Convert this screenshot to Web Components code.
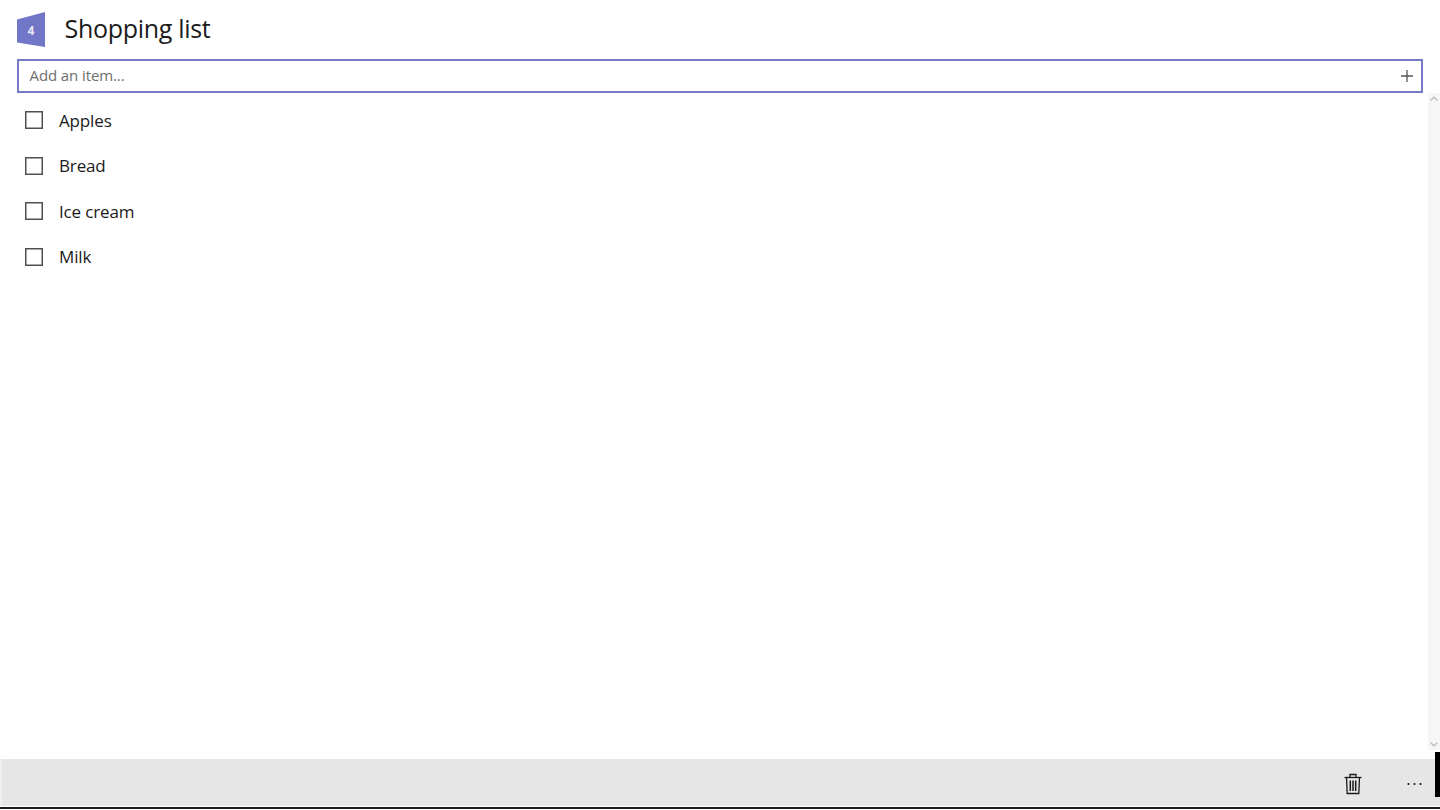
<!DOCTYPE html>
<html>
<head>
<meta charset="utf-8">
<title>Shopping list</title>
<style>
    html,body{
        margin:0;
        height:100%;
        background:white;
        overflow:hidden;
    }
    body{
        font-family:'Open Sans','Noto Sans',sans-serif;
        color:#1a1a1a;
    }
</style>
</head>
<body>
<list-app>
    <list-item>Apples</list-item>
    <list-item>Bread</list-item>
    <list-item>Ice cream</list-item>
    <list-item>Milk</list-item>
</list-app>

<script>
// LIST ROW
const itemTemplate = document.createElement('template');
itemTemplate.innerHTML = `
<style>
    :host{
        display:flex;
        align-items:center;
        height:45.5px;
        padding-left:25px;
        font-size:17px;
        letter-spacing:-0.15px;
    }
    .box{
        margin-right:16px;
        flex:none;
        display:block;
    }
</style>
<svg class="box" width="18" height="18" viewBox="0 0 18 18"><rect x="0.75" y="0.75" width="16.5" height="16.5" fill="none" stroke="#505050" stroke-width="1.5"/></svg>
<span><slot></slot></span>
`;

class ListItem extends HTMLElement{
    constructor(){
        super();
        this.attachShadow({mode:'open'});
        this.shadowRoot.appendChild(itemTemplate.content.cloneNode(true));
    }
}
window.customElements.define('list-item', ListItem);

// HEADER
const headerTemplate = document.createElement('template');
headerTemplate.innerHTML = `
<style>
    :host{
        display:flex;
        align-items:center;
        height:59px;
        padding-left:17px;
    }
    .badge{
        position:relative;
        width:28px;
        height:36px;
        flex:none;
        margin-right:19.5px;
    }
    svg{
        display:block;
    }
    .badge span{
        position:absolute;
        left:10.5px;
        top:11px;
        font-size:12px;
        line-height:16px;
        font-weight:700;
        color:#e8e8f6;
    }
    h1{
        margin:0 0 4px;
        font-size:25px;
        font-weight:400;
        letter-spacing:-0.3px;
        color:#1a1a1a;
    }
</style>
<div class="badge">
    <svg width="28" height="36" viewBox="0 0 28 36"><path d="M0 7.5 28 0V35L0 30.5Z" fill="#7276c6"/></svg>
    <span>4</span>
</div>
<h1>Shopping list</h1>
`;

class ListHeader extends HTMLElement{
    constructor(){
        super();
        this.attachShadow({mode:'open'});
        this.shadowRoot.appendChild(headerTemplate.content.cloneNode(true));
    }
}
window.customElements.define('list-header', ListHeader);

// ADD BOX
const addTemplate = document.createElement('template');
addTemplate.innerHTML = `
<style>
    :host{
        display:flex;
        align-items:center;
        box-sizing:border-box;
        height:34px;
        margin:0 17px;
        border:2px solid #7579c9;
        padding:0 8px 0 10.5px;
        font-size:15px;
        color:#6e6e6e;
    }
    span{
        flex:1;
        letter-spacing:-0.1px;
        margin-bottom:2px;
    }
</style>
<span>Add an item...</span>
<svg width="12" height="12" viewBox="0 0 12 12"><path d="M6 0V12M0 6H12" stroke="#555" stroke-width="1.3" fill="none"/></svg>
`;

class AddBox extends HTMLElement{
    constructor(){
        super();
        this.attachShadow({mode:'open'});
        this.shadowRoot.appendChild(addTemplate.content.cloneNode(true));
    }
}
window.customElements.define('add-box', AddBox);

// SCROLLBAR
const scrollTemplate = document.createElement('template');
scrollTemplate.innerHTML = `
<style>
    :host{
        display:flex;
        flex-direction:column;
        justify-content:space-between;
        width:12px;
        background:#f6f6f6;
    }
    svg{
        display:block;
    }
</style>
<svg width="12" height="12" viewBox="0 0 12 12"><path d="M2.5 7.5 6 4.2 9.5 7.5" stroke="#bdbdbd" stroke-width="1.4" fill="none"/></svg>
<svg width="12" height="12" viewBox="0 0 12 12"><path d="M2.5 4.5 6 7.8 9.5 4.5" stroke="#bdbdbd" stroke-width="1.4" fill="none"/></svg>
`;

class ScrollRail extends HTMLElement{
    constructor(){
        super();
        this.attachShadow({mode:'open'});
        this.shadowRoot.appendChild(scrollTemplate.content.cloneNode(true));
    }
}
window.customElements.define('scroll-rail', ScrollRail);

// COMMAND BAR
const barTemplate = document.createElement('template');
barTemplate.innerHTML = `
<style>
    :host{
        display:block;
        height:51px;
        position:relative;
    }
    .bar{
        box-sizing:border-box;
        height:47px;
        background:#e6e6e6;
        border-left:2px solid #efefef;
        display:flex;
        align-items:center;
        justify-content:flex-end;
        padding:3px 18px 0 0;
    }
    .line{
        height:2px;
        margin-top:1px;
        background:#1a1a1a;
    }
    svg{
        display:block;
    }
    .trash{
        margin-right:44px;
    }
    .thumb{
        position:absolute;
        right:0;
        top:-7px;
        width:5px;
        height:45px;
        background:#000;
    }
</style>
<div class="bar">
    <svg class="trash" width="18" height="22" viewBox="0 0 18 22" fill="none" stroke="#1a1a1a" stroke-width="1.3">
        <path d="M0.5 4.5H17.5"/>
        <path d="M6 4.5V1.5H12V4.5"/>
        <path d="M2.5 4.5 3.2 20.5H14.8L15.5 4.5"/>
        <path d="M6.3 7.5V18M9 7.5V18M11.7 7.5V18" stroke-width="1.5"/>
    </svg>
    <svg width="16" height="4" viewBox="0 0 16 4" fill="#1a1a1a">
        <circle cx="2.5" cy="2" r="1.1"/><circle cx="8.5" cy="2" r="1.1"/><circle cx="14.5" cy="2" r="1.1"/>
    </svg>
</div>
<div class="line"></div>
<div class="thumb"></div>
`;

class CommandBar extends HTMLElement{
    constructor(){
        super();
        this.attachShadow({mode:'open'});
        this.shadowRoot.appendChild(barTemplate.content.cloneNode(true));
    }
}
window.customElements.define('command-bar', CommandBar);

// PAGE
const appTemplate = document.createElement('template');
appTemplate.innerHTML = `
<style>
    :host{
        display:flex;
        flex-direction:column;
        height:810px;
    }
    .middle{
        flex:1;
        display:flex;
        min-height:0;
        padding-bottom:9px;
    }
    .items{
        flex:1;
        padding-top:4.5px;
    }
</style>
<list-header></list-header>
<add-box></add-box>
<div class="middle">
    <div class="items"><slot></slot></div>
    <scroll-rail></scroll-rail>
</div>
<command-bar></command-bar>
`;

class ListApp extends HTMLElement{
    constructor(){
        super();
        this.attachShadow({mode:'open'});
        this.shadowRoot.appendChild(appTemplate.content.cloneNode(true));
    }
}
window.customElements.define('list-app', ListApp);
</script>
</body>
</html>
